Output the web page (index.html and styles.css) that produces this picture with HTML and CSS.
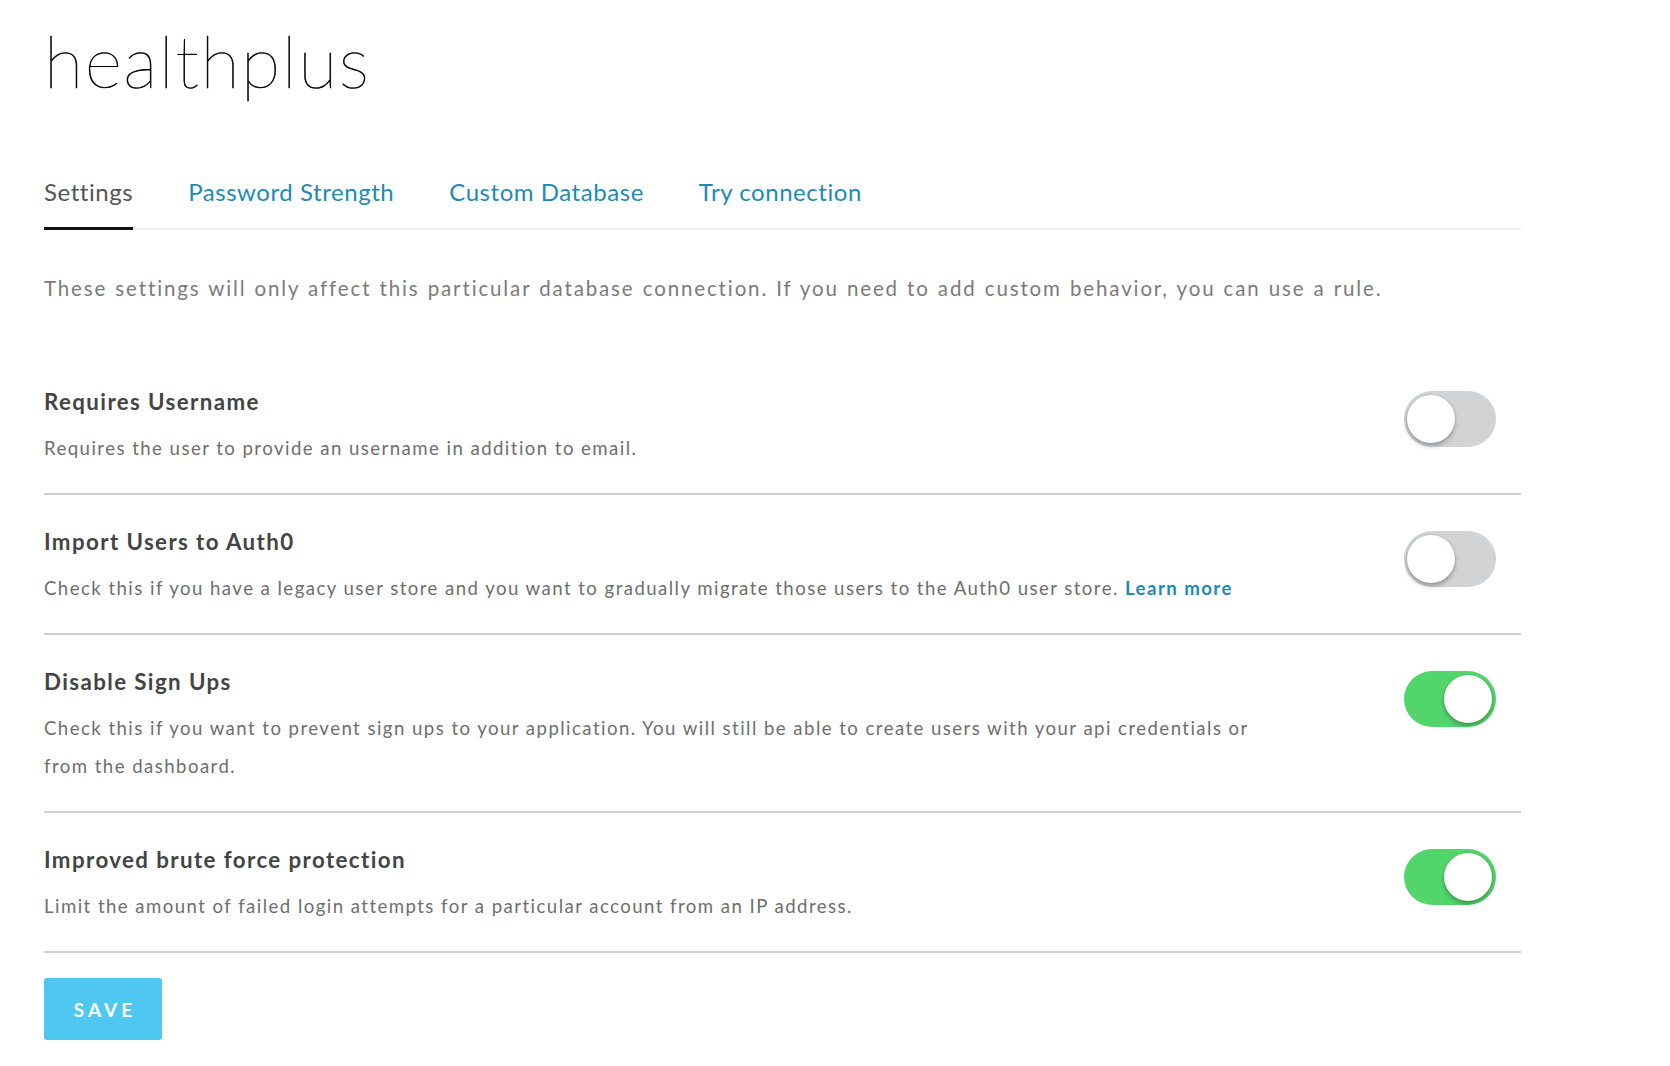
FILE: index.html
```html
<!DOCTYPE html>
<html lang="en">
<head>
<meta charset="utf-8">
<title>healthplus</title>
<link rel="stylesheet" href="styles.css">
</head>
<body>
<main class="page">
  <h1 class="app-title">healthplus</h1>
  <nav class="tabs">
    <a class="tab active">Settings</a>
    <a class="tab">Password Strength</a>
    <a class="tab">Custom Database</a>
    <a class="tab">Try connection</a>
  </nav>
  <p class="intro">These settings will only affect this particular database connection. If you need to add custom behavior, you can use a rule.</p>
  <section class="settings">
    <div class="row">
      <div class="row-text">
        <h3 class="row-title">Requires Username</h3>
        <p class="row-desc">Requires the user to provide an username in addition to email.</p>
      </div>
      <div class="toggle"><span class="knob"></span></div>
    </div>
    <div class="row">
      <div class="row-text">
        <h3 class="row-title">Import Users to Auth0</h3>
        <p class="row-desc">Check this if you have a legacy user store and you want to gradually migrate those users to the Auth0 user store. <a class="link">Learn more</a></p>
      </div>
      <div class="toggle"><span class="knob"></span></div>
    </div>
    <div class="row">
      <div class="row-text">
        <h3 class="row-title">Disable Sign Ups</h3>
        <p class="row-desc">Check this if you want to prevent sign ups to your application. You will still be able to create users with your api credentials or from the dashboard.</p>
      </div>
      <div class="toggle on"><span class="knob"></span></div>
    </div>
    <div class="row">
      <div class="row-text">
        <h3 class="row-title">Improved brute force protection</h3>
        <p class="row-desc">Limit the amount of failed login attempts for a particular account from an IP address.</p>
      </div>
      <div class="toggle on"><span class="knob"></span></div>
    </div>
  </section>
  <button class="save">SAVE</button>
</main>
</body>
</html>
```
FILE: styles.css
```css
* { box-sizing: border-box; }
html, body { margin: 0; padding: 0; background: #fff; }
body {
  font-family: Lato, "Liberation Sans", sans-serif;
  color: #333;
}
.page {
  width: 1521px;
  padding-left: 44px;
}
.app-title {
  margin: 17px 0 0;
  font-size: 72px;
  line-height: 86px;
  font-weight: 100;
  color: #000;
  -webkit-text-stroke: 0.6px #000;
  letter-spacing: 1.5px;
}
.tabs {
  display: flex;
  gap: 55px;
  margin-top: 76px;
  border-bottom: 2px solid #eeeeee;
}
.tab {
  font-size: 24px;
  line-height: 26px;
  letter-spacing: 0.55px;
  color: #1d8ab4;
  padding-bottom: 22px;
  border-bottom: 3px solid transparent;
  margin-bottom: -2px;
  cursor: pointer;
}
.tab.active {
  color: #555;
  border-bottom-color: #111;
}
.intro {
  margin: 43px 0 0;
  font-size: 20.5px;
  line-height: 30px;
  letter-spacing: 1.87px;
  word-spacing: 1px;
  color: #7b7b7b;
}
.settings {
  margin-top: 52px;
}
.row {
  display: flex;
  justify-content: space-between;
  align-items: flex-start;
  padding: 34px 25px 26px 0;
  border-bottom: 2px solid #cfcfcf;
}
.row-text {
  width: 1240px;
}
.row-title {
  margin: 0;
  font-size: 22.3px;
  line-height: 26px;
  letter-spacing: 1.4px;
  font-weight: 700;
  color: #444;
}
.row-desc {
  margin: 14px 0 0;
  font-size: 18.6px;
  line-height: 38px;
  letter-spacing: 1.45px;
  color: #6e6e6e;
}
.link {
  color: #1d8ab4;
  font-weight: 700;
  cursor: pointer;
}
.toggle {
  width: 92px;
  height: 56px;
  border-radius: 28px;
  background: #d2d3d5;
  display: flex;
  align-items: center;
  padding: 0 4px 0 3px;
  flex-shrink: 0;
  margin-top: 2px;
}
.toggle.on {
  background: #52d66b;
  justify-content: flex-end;
}
.knob {
  width: 48px;
  height: 48px;
  border-radius: 50%;
  background: #fff;
  box-shadow: 0 3px 5px rgba(0, 0, 0, 0.28), 0 0 0 1px rgba(0, 0, 0, 0.06);
}
.save {
  margin-top: 25px;
  width: 118px;
  height: 62px;
  padding: 0 0 0 4px;
  border: 0;
  border-radius: 3px;
  background: #4fc8f1;
  color: #fff;
  font-family: Lato, "Liberation Sans", sans-serif;
  font-size: 19px;
  font-weight: 700;
  letter-spacing: 4px;
  cursor: pointer;
}
```
